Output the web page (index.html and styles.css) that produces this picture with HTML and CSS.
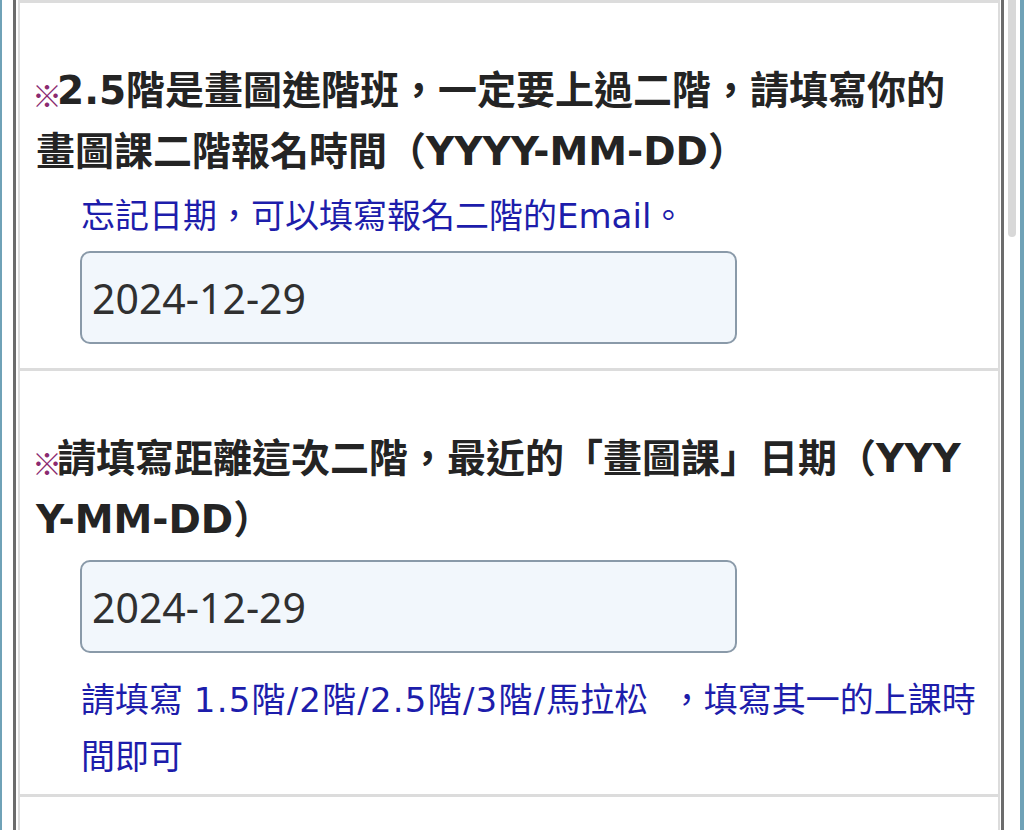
FILE: index.html
```html
<!DOCTYPE html>
<html lang="zh-Hant">
<head>
  <meta charset="UTF-8" />
  <meta name="viewport" content="width=device-width, initial-scale=1.0"/>
  <title>畫圖課報名表</title>
  <link rel="stylesheet" href="styles.css">
</head>
<body>
  <div class="screen">
    <div class="frame">
      <form class="form">
        <div class="question">
          <label class="title" for="signupDate"><span class="mark">※</span>2.5階是畫圖進階班，一定要上過二階，請填寫你的畫圖課二階報名時間（YYYY-MM-DD）</label>
          <p class="hint hint-top">忘記日期，可以填寫報名二階的Email。</p>
          <input class="field" type="text" id="signupDate" value="2024-12-29" />
        </div>

        <div class="question">
          <label class="title" for="lastDate"><span class="mark">※</span>請填寫距離這次二階，最近的「畫圖課」日期（YYYY-MM-DD）</label>
          <input class="field" type="text" id="lastDate" value="2024-12-29" />
          <p class="hint">請填寫 <span class="levels">1.5階/2階/2.5階/3階/</span>馬拉松&nbsp;&nbsp;，填寫其一的上課時間即可</p>
        </div>

        <div class="question"></div>
      </form>
    </div>
    <div class="scrollbar"><div class="thumb"></div></div>
  </div>
</body>
</html>
```

FILE: styles.css
```css
html, body {
  margin: 0;
  padding: 0;
  background-color: white;
}
.screen {
  display: flex;
  height: 830px;
  overflow: hidden;
  border-left: 2px solid #6fa2b7;
  border-right: 4px solid #6fa2b7;
}
.frame {
  flex: 1;
  display: flex;
  margin-left: 11px;
  padding: 0 1px 0 2px;
  border-left: 3px solid #6c6c6c;
  border-right: 3px solid #6c6c6c;
}
.form {
  flex: 1;
  margin: 0;
  border-left: 2px solid #dcdcdc;
  border-right: 2px solid #dcdcdc;
}
.question {
  padding: 57px 16px 8px;
  border-top: 3px solid #dcdcdc;
}
.title {
  display: block;
  font-family: "DejaVu Sans", "Noto Sans CJK TC", sans-serif;
  font-size: 39px;
  font-weight: bold;
  line-height: 61px;
  color: #242424;
  word-break: break-all;
}
.mark {
  display: inline-block;
  margin: 0 -5px 0 -4px;
  font-family: "Noto Sans CJK TC", sans-serif;
  font-size: 30px;
  font-weight: bold;
  line-height: 1;
  vertical-align: -3px;
  color: #8b2a70;
}
.hint {
  margin: 0;
  padding-left: 45px;
  font-family: "DejaVu Sans", "Noto Sans CJK TC", sans-serif;
  font-size: 34px;
  line-height: 57px;
  color: #1d1dab;
}
.hint-top {
  margin-top: 6px;
}
.field + .hint {
  margin-top: 19px;
}
.levels {
  letter-spacing: 1.2px;
}
.field {
  display: block;
  box-sizing: border-box;
  width: 657px;
  height: 93px;
  margin: 6px 0 16px 44px;
  padding: 0 10px;
  border: 2px solid #8a9aa9;
  border-radius: 10px;
  background-color: #f2f7fc;
  font-family: "Noto Sans", sans-serif;
  font-size: 41px;
  color: #303030;
}
.title + .field {
  margin-top: 10px;
}
.scrollbar {
  width: 16px;
}
.thumb {
  width: 8px;
  height: 237px;
  margin-left: 4px;
  border-radius: 0 0 4px 4px;
  background-color: #d8d8d8;
}
```
